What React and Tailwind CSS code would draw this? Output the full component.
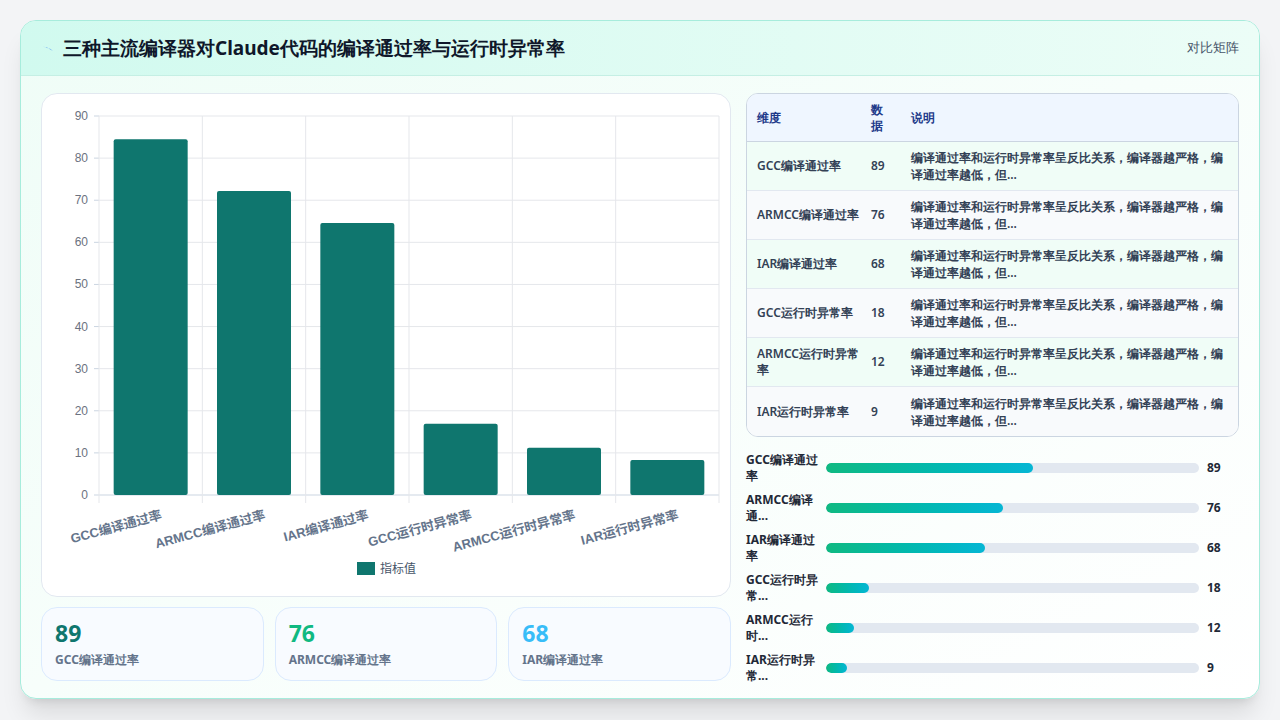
import React from "react";

const bars = [
  { label: "GCC编译通过率", v: 84.5 },
  { label: "ARMCC编译通过率", v: 72.2 },
  { label: "IAR编译通过率", v: 64.6 },
  { label: "GCC运行时异常率", v: 16.9 },
  { label: "ARMCC运行时异常率", v: 11.2 },
  { label: "IAR运行时异常率", v: 8.3 },
];

const rows = [
  ["GCC编译通过率", 89],
  ["ARMCC编译通过率", 76],
  ["IAR编译通过率", 68],
  ["GCC运行时异常率", 18],
  ["ARMCC运行时异常率", 12],
  ["IAR运行时异常率", 9],
];

const progress = [
  ["GCC编译通过", "率", 89, 55.5],
  ["ARMCC编译", "通...", 76, 47.5],
  ["IAR编译通过", "率", 68, 42.5],
  ["GCC运行时异", "常...", 18, 11.5],
  ["ARMCC运行", "时...", 12, 7.5],
  ["IAR运行时异", "常...", 9, 5.5],
];

const note = "编译通过率和运行时异常率呈反比关系，编译器越严格，编译通过率越低，但...";

function Chart() {
  const x0 = 57, y0 = 401, h = 379, w = 620;
  const step = w / 6;
  return (
    <svg width="689" height="503" className="block">
      {[0, 1, 2, 3, 4, 5, 6, 7, 8, 9].map((i) => {
        const y = y0 - (h * i) / 9;
        return (
          <g key={i}>
            <line x1={x0} x2={x0 + w} y1={y} y2={y} stroke={i === 0 ? "#cbd5e1" : "#e5e7eb"} />
            <line x1={x0 - 5} x2={x0} y1={y} y2={y} stroke="#cbd5e1" />
            <text x={x0 - 11} y={y + 4} textAnchor="end" fontSize="12" fill="#6b7280" fontFamily="Liberation Sans, sans-serif">
              {i * 10}
            </text>
          </g>
        );
      })}
      {[0, 1, 2, 3, 4, 5, 6].map((i) => (
        <line key={i} x1={x0 + i * step} x2={x0 + i * step} y1={y0 - h} y2={y0 + 8} stroke="#e5e7eb" />
      ))}
      {bars.map((b, i) => {
        const bh = (h * b.v) / 90;
        const cx = x0 + i * step + step / 2;
        return (
          <g key={i}>
            <rect x={cx - 37} y={y0 - bh} width="74" height={bh} rx="2" fill="#0f766e" />
            <text
              transform={`translate(${cx + 12},${y0 + 24}) rotate(-15)`}
              textAnchor="end"
              fontSize="13"
              fill="#64748b"
              fontWeight="600"
              fontFamily="Liberation Sans, Noto Sans CJK SC, sans-serif"
            >
              {b.label}
            </text>
          </g>
        );
      })}
      <rect x="315" y="468" width="18" height="13" fill="#0f766e" />
      <text x="338" y="479" fontSize="12" fill="#475569" fontFamily="Noto Sans CJK SC, sans-serif">指标值</text>
    </svg>
  );
}

export default function App() {
  return (
    <div className="w-[1280px] h-[720px] bg-[#f3f4f6] p-5 font-['Noto_Sans_CJK_SC',sans-serif] overflow-hidden">
      <div className="h-[679px] rounded-2xl border border-[#a7ecdc] bg-gradient-to-br from-[#effdf7] to-white shadow-xl overflow-hidden flex flex-col">
        <div className="h-[55px] shrink-0 flex items-center justify-between px-5 bg-gradient-to-r from-[#d1faef] to-[#ecfdf7] border-b border-[#c5efe4]">
          <div className="flex items-center gap-2">
            <svg width="14" height="10" viewBox="0 0 14 10">
              <path d="M1 3 L6 5 L5 4 L12 8 L8 5 L9 6 Z" fill="#3b82f6" />
            </svg>
            <span className="text-[19px] font-bold text-[#0f172a]">三种主流编译器对Claude代码的编译通过率与运行时异常率</span>
          </div>
          <span className="text-[13px] text-[#475569]">对比矩阵</span>
        </div>
        <div className="flex gap-[15px] px-5 pt-[17px] shrink-0">
          <div className="w-[690px] flex flex-col gap-[10px]">
            <div className="h-[504px] rounded-2xl border border-[#e2e8f0] bg-white">
              <Chart />
            </div>
            <div className="grid grid-cols-3 gap-[11px]">
              {[
                ["89", "text-[#0f766e]", "GCC编译通过率"],
                ["76", "text-[#10b981]", "ARMCC编译通过率"],
                ["68", "text-[#38bdf8]", "IAR编译通过率"],
              ].map(([n, c, l]) => (
                <div key={l} className="h-[74px] rounded-2xl border border-[#dbeafe] bg-[#f8fbff] px-[13px] pt-[10px]">
                  <div className={`text-[23px] font-bold leading-[30px] ${c}`}>{n}</div>
                  <div className="text-[12px] font-bold text-[#64748b] mt-[3px]">{l}</div>
                </div>
              ))}
            </div>
          </div>
          <div className="w-[497px] flex flex-col">
            <div className="rounded-xl border border-[#cbd5e1] overflow-hidden bg-white">
              <div className="flex items-center h-[48px] bg-[#eff6ff] border-b border-[#cbd5e1] text-[12px] font-bold text-[#1e3a8a]">
                <div className="w-[124px] pl-[10px]">维度</div>
                <div className="w-[40px] leading-[16px]">数<br />据</div>
                <div className="flex-1">说明</div>
              </div>
              {rows.map(([d, n], i) => (
                <div key={d} className={`flex items-center h-[49px] text-[12px] font-semibold text-[#334155] ${i < 5 ? "border-b border-[#e2e8f0]" : ""} ${i % 2 ? "bg-[#f8fafc]" : "bg-[#f0fdf7]"}`}>
                  <div className="w-[124px] pl-[10px] pr-2 leading-[16px]">{d}</div>
                  <div className="w-[40px]">{n}</div>
                  <div className="flex-1 pr-3 leading-[17px]">{note}</div>
                </div>
              ))}
            </div>
            <div className="flex flex-col mt-[11px]">
              {progress.map(([a, b, n, p]) => (
                <div key={a} className="flex items-center h-[40px]">
                  <div className="w-[80px] text-[12px] font-bold text-[#1f2937] leading-[16px]">{a}<br />{b}</div>
                  <div className="w-[373px] h-[10px] rounded-full bg-[#e2e8f0] overflow-hidden">
                    <div className="h-full rounded-full bg-gradient-to-r from-[#10b981] to-[#06b6d4]" style={{ width: p + "%" }} />
                  </div>
                  <div className="ml-[8px] text-[12px] font-bold text-[#1f2937]">{n}</div>
                </div>
              ))}
              <div className="flex gap-[10px] mt-[10px]">
                {[72, 52, 54, 70].map((w, i) => (
                  <div key={i} className="h-[24px] rounded-full border border-[#e2e8f0] bg-white" style={{ width: w }} />
                ))}
              </div>
            </div>
          </div>
        </div>
      </div>
    </div>
  );
}
